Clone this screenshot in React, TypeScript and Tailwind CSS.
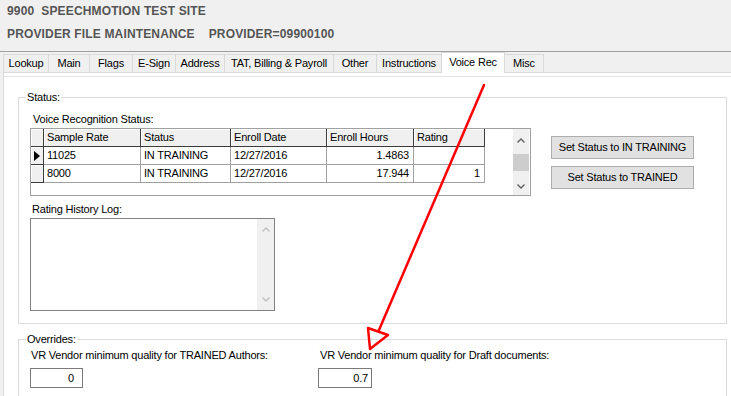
import React from "react";

const tabs = [
  { label: "Lookup", w: "w-[46px] border-l" },
  { label: "Main", w: "w-[41px]" },
  { label: "Flags", w: "w-[43px]" },
  { label: "E-Sign", w: "w-[43px]" },
  { label: "Address", w: "w-[49px]" },
  { label: "TAT, Billing & Payroll", w: "w-[109px]" },
  { label: "Other", w: "w-[43px]" },
  { label: "Instructions", w: "w-[65px]" },
  { label: "Voice Rec", w: "w-[64px]", active: true },
  { label: "Misc", w: "w-[39px]" },
];

const rows = [
  { rate: "11025", status: "IN TRAINING", date: "12/27/2016", hours: "1.4863", rating: "", current: true },
  { rate: "8000", status: "IN TRAINING", date: "12/27/2016", hours: "17.944", rating: "1", current: false },
];

const Chevron = ({ up, color }: { up?: boolean; color: string }) => (
  <svg width="8" height="5" viewBox="0 0 8 5">
    <path d={up ? "M0.5 4.5 L4 1 L7.5 4.5" : "M0.5 0.5 L4 4 L7.5 0.5"} fill="none" stroke={color} strokeWidth="1.4" />
  </svg>
);

const headCell = "bg-[#f0f0f0] border-r border-b border-[#3c3c3c] shadow-[inset_1px_1px_0_#ffffff] px-[3px] flex items-center";
const dataCell = "border-r border-b border-[#a0a0a0] px-[3px] flex items-center";

const StatusGrid = () => (
  <div className="w-[501px] h-[68px] border border-[#a0a0a0] bg-white flex">
    <div className="flex-1">
      <div className="flex h-[18px]">
        <div className={`${headCell} w-[13px]`} />
        <div className={`${headCell} w-[97px]`}>Sample Rate</div>
        <div className={`${headCell} w-[90px]`}>Status</div>
        <div className={`${headCell} w-[96px]`}>Enroll Date</div>
        <div className={`${headCell} w-[87px]`}>Enroll Hours</div>
        <div className={`${headCell} w-[71px]`}>Rating</div>
      </div>
      {rows.map((r) => (
        <div key={r.rate} className="flex h-[18px]">
          <div className={`${headCell} w-[13px] !px-0 justify-center`}>
            {r.current && (
              <svg width="6" height="10" viewBox="0 0 6 10">
                <path d="M0 0 L6 5 L0 10 Z" fill="#000" />
              </svg>
            )}
          </div>
          <div className={`${dataCell} w-[97px]`}>{r.rate}</div>
          <div className={`${dataCell} w-[90px]`}>{r.status}</div>
          <div className={`${dataCell} w-[96px]`}>{r.date}</div>
          <div className={`${dataCell} w-[87px] justify-end pr-[4px]`}>{r.hours}</div>
          <div className={`${dataCell} w-[71px] justify-end pr-[4px]`}>{r.rating}</div>
        </div>
      ))}
    </div>
    <div className="w-[16px] mr-[1px] bg-[#f0f0f0] flex flex-col">
      <div className="h-[22px] flex items-center justify-center">
        <Chevron up color="#606060" />
      </div>
      <div className="flex-1">
        <div className="mt-[3px] h-[17px] bg-[#cdcdcd]" />
      </div>
      <div className="h-[17px] flex items-center justify-center">
        <Chevron color="#606060" />
      </div>
    </div>
  </div>
);

const Input = ({ value, w, pr }: { value: string; w: string; pr: string }) => (
  <div className={`${w} ${pr} h-[20px] border border-[#7a7a7a] bg-white flex items-center justify-end`}>{value}</div>
);

export default function App() {
  return (
    <div className="relative w-[731px] h-[396px] overflow-hidden bg-[#f0f0f0] font-[Liberation_Sans,Arial,sans-serif] text-[11px] leading-[13px] tracking-[-0.2px] text-black">
      {/* header */}
      <div className="pl-[7px] pt-[4px] font-bold text-[12px] leading-[14px] tracking-[0.15px] text-[#555555] whitespace-pre">
        <div className="h-[23px]">9900  SPEECHMOTION TEST SITE</div>
        <div>PROVIDER FILE MAINTENANCE    PROVIDER=09900100</div>
      </div>
      <div className="mt-[10px] border-t border-[#a0a0a0]" />

      {/* tabs */}
      <div className="pl-[3px] h-[20px] flex items-end">
        {tabs.map((t) =>
          t.active ? (
            <div
              key={t.label}
              className={`${t.w} h-[21px] -mb-[1px] relative z-10 bg-white border-t border-r border-l -ml-[1px] border-[#d9d9d9] flex justify-center pt-[3px]`}
            >
              {t.label}
            </div>
          ) : (
            <div
              key={t.label}
              className={`${t.w} h-[18px] bg-[#f0f0f0] border-t border-r border-[#d9d9d9] flex items-center justify-center`}
            >
              {t.label}
            </div>
          )
        )}
      </div>

      {/* tab page */}
      <div className="ml-[3px] h-[400px] bg-white border-l border-t border-[#d9d9d9]">
        <div className="mt-[3px] border-t border-[#e3e3e3]">
          <fieldset className="ml-[14px] mt-[14px] w-[709px] border border-[#dcdcdc]">
            <legend className="ml-[7px] px-[1px]">Status:</legend>
            <div className="flex pl-[11px] pt-[9px] pb-[12px]">
              <div className="w-[501px]">
                <div className="pl-[3px] h-[15px]">Voice Recognition Status:</div>
                <StatusGrid />
                <div className="pl-[2px] mt-[7px] h-[15px]">Rating History Log:</div>
                <div className="w-[245px] h-[93px] border border-[#828282] bg-white flex justify-end">
                  <div className="w-[17px] bg-[#f0f0f0] flex flex-col justify-between py-[8px] items-center">
                    <Chevron up color="#c0c0c0" />
                    <Chevron color="#c0c0c0" />
                  </div>
                </div>
              </div>
              <div className="ml-[20px] mt-[23px] flex flex-col gap-[7px]">
                <button className="w-[143px] h-[23px] bg-[#e1e1e1] border border-[#adadad] text-center">
                  Set Status to IN TRAINING
                </button>
                <button className="w-[143px] h-[23px] bg-[#e1e1e1] border border-[#adadad] text-center">
                  Set Status to TRAINED
                </button>
              </div>
            </div>
          </fieldset>

          <fieldset className="ml-[14px] mt-[9px] w-[709px] h-[90px] border border-[#dcdcdc]">
            <legend className="ml-[7px] px-[1px]">Overrides:</legend>
            <div className="flex pl-[11px] pt-[3px]">
              <div className="w-[288px]">
                <div className="pl-[1px] h-[19px]">VR Vendor minimum quality for TRAINED Authors:</div>
                <Input value="0" w="w-[53px]" pr="pr-[8px]" />
              </div>
              <div>
                <div className="pl-[2px] h-[19px]">VR Vendor minimum quality for Draft documents:</div>
                <Input value="0.7" w="w-[54px]" pr="pr-[3px]" />
              </div>
            </div>
          </fieldset>
        </div>
      </div>

      {/* red annotation arrow */}
      <svg className="absolute inset-0 pointer-events-none" width="731" height="396" viewBox="0 0 731 396">
        <path d="M484 85 L379 330" stroke="#ff0000" strokeWidth="2.5" fill="none" strokeLinecap="round" />
        <path d="M368 328 L388 335 L370 349 Z" stroke="#ff0000" strokeWidth="2.5" fill="none" strokeLinejoin="round" />
      </svg>
    </div>
  );
}
